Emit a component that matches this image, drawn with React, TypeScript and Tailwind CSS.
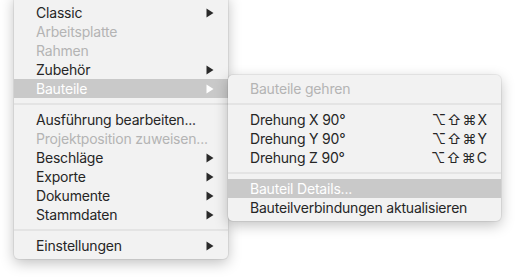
type Item =
  | { kind: "sep" }
  | { kind: "item"; label: string; disabled?: boolean; sub?: boolean; active?: boolean; shortcut?: string }

const mainItems: Item[] = [
  { kind: "item", label: "Classic", sub: true },
  { kind: "item", label: "Arbeitsplatte", disabled: true },
  { kind: "item", label: "Rahmen", disabled: true },
  { kind: "item", label: "Zubehör", sub: true },
  { kind: "item", label: "Bauteile", sub: true, active: true },
  { kind: "sep" },
  { kind: "item", label: "Ausführung bearbeiten..." },
  { kind: "item", label: "Projektposition zuweisen...", disabled: true },
  { kind: "item", label: "Beschläge", sub: true },
  { kind: "item", label: "Exporte", sub: true },
  { kind: "item", label: "Dokumente", sub: true },
  { kind: "item", label: "Stammdaten", sub: true },
  { kind: "sep" },
  { kind: "item", label: "Einstellungen", sub: true },
]

const subItems: Item[] = [
  { kind: "item", label: "Bauteile gehren", disabled: true },
  { kind: "sep" },
  { kind: "item", label: "Drehung X 90°", shortcut: "X" },
  { kind: "item", label: "Drehung Y 90°", shortcut: "Y" },
  { kind: "item", label: "Drehung Z 90°", shortcut: "C" },
  { kind: "sep" },
  { kind: "item", label: "Bauteil Details...", active: true },
  { kind: "item", label: "Bauteilverbindungen aktualisieren" },
]

function Arrow({ light }: { light?: boolean }) {
  return (
    <svg width="8" height="10" viewBox="0 0 8 10" className="shrink-0">
      <path d="M0.5 0.5 L7.5 5 L0.5 9.5 Z" fill={light ? "#ffffff" : "#2a2a2a"} />
    </svg>
  )
}

function Row({ item }: { item: Item }) {
  if (item.kind === "sep") {
    return (
      <div className="h-[12px] flex items-center">
        <div className="h-[2px] w-full bg-[#e4e4e4]" />
      </div>
    )
  }
  const color = item.active ? "text-white" : item.disabled ? "text-[#b4b4b4]" : "text-[#262626]"
  return (
    <div className={`h-[19px] flex items-center pl-[22px] pr-[14px] ${item.active ? "bg-[#c9c9c9]" : ""}`}>
      <span className={`flex-1 whitespace-nowrap tracking-[-0.2px] ${color}`}>{item.label}</span>
      {item.sub && <Arrow light={item.active} />}
      {item.shortcut && (
        <span className={`flex gap-[1px] ${color}`}>
          <span>⌥</span>
          <span>⇧</span>
          <span>⌘</span>
          <span>{item.shortcut}</span>
        </span>
      )}
    </div>
  )
}

export default function App() {
  return (
    <div
      className="w-[516px] h-[278px] bg-white overflow-hidden text-[14px] leading-[19px]"
      style={{ fontFamily: '"Helvetica Neue", Inter, "Liberation Sans", "DejaVu Sans", sans-serif' }}
    >
      <div className="ml-[14px] mt-[-6px] w-[214px] pt-[9px] pb-[4px] bg-[#f2f2f2] rounded-[5px] shadow-[0_4px_14px_rgba(0,0,0,0.25),0_0_0_1px_rgba(0,0,0,0.06)]">
        {mainItems.map((item, i) => (
          <div key={i} className="relative">
            <Row item={item} />
            {item.kind === "item" && item.active && (
              <div className="absolute left-full top-[-4px] w-[273px] py-[4px] bg-[#f2f2f2] rounded-[5px] shadow-[0_4px_14px_rgba(0,0,0,0.25),0_0_0_1px_rgba(0,0,0,0.06)] z-10">
                {subItems.map((s, j) => (
                  <Row key={j} item={s} />
                ))}
              </div>
            )}
          </div>
        ))}
      </div>
    </div>
  )
}
